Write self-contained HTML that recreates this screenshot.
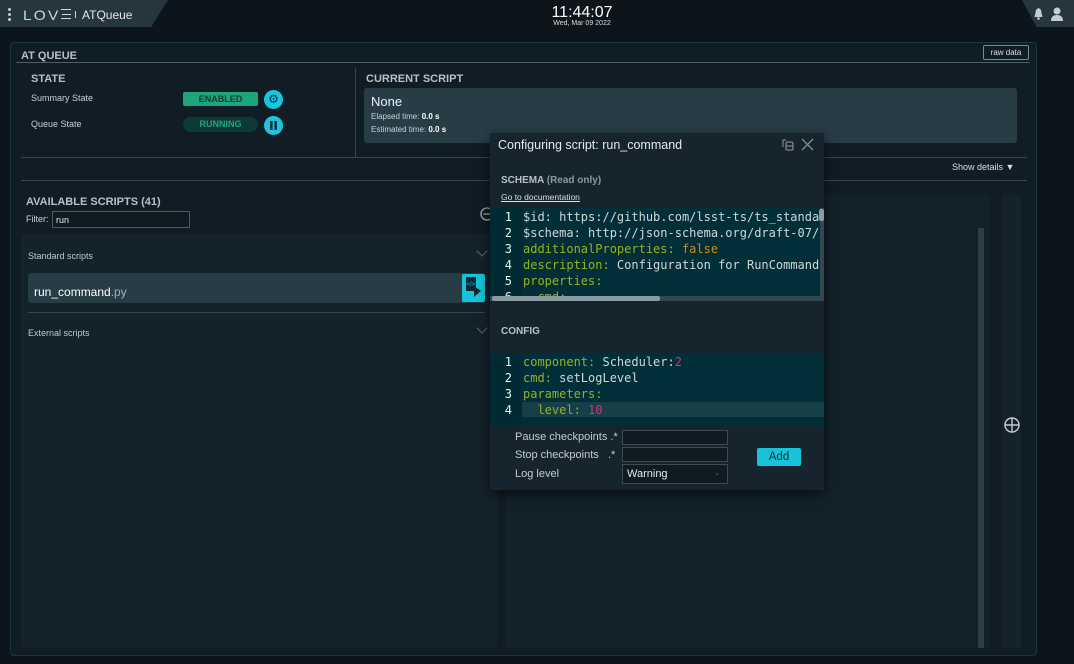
<!DOCTYPE html>
<html><head><meta charset="utf-8"><style>
*{box-sizing:border-box;margin:0;padding:0}
body{width:1074px;height:664px;background:#0b151b;font-family:"Liberation Sans",sans-serif;color:#c9d1d5;position:relative;overflow:hidden;font-size:11px}
.a{position:absolute}
.mono{font-family:"DejaVu Sans Mono","Liberation Mono",monospace}
.h{font-weight:bold;color:#b7c0c5}
</style></head><body>
<!-- top bar -->
<div class="a" style="left:0;top:0;width:168px;height:27px;background:#26363e;clip-path:polygon(0 0,100% 0,90% 100%,0 100%)"></div>
<div class="a" style="left:8px;top:8px;width:3px;height:3px;background:#ccc;border-radius:50%"></div>
<div class="a" style="left:8px;top:13px;width:3px;height:3px;background:#ccc;border-radius:50%"></div>
<div class="a" style="left:8px;top:18px;width:3px;height:3px;background:#ccc;border-radius:50%"></div>
<div class="a" style="left:23px;top:7px;font-size:14px;letter-spacing:2px;color:#d0d6da;transform:scaleX(1.1);transform-origin:left">LOV</div>
<div class="a" style="left:61px;top:9px;width:10px;height:10px;border-top:1.3px solid #d0d6da;border-bottom:1.3px solid #d0d6da"></div>
<div class="a" style="left:62px;top:13.5px;width:9px;height:1.3px;background:#d0d6da"></div>
<div class="a" style="left:75px;top:11px;width:1.3px;height:7px;background:#d0d6da"></div>
<div class="a" style="left:82px;top:8px;font-size:12px;color:#e2e6e8">ATQueue</div>
<div class="a" style="left:540px;top:4px;width:84px;text-align:center;font-size:16px;color:#fff">11:44:07</div>
<div class="a" style="left:540px;top:20px;width:84px;text-align:center;font-size:7px;color:#ddd">Wed, Mar 09 2022</div>
<div class="a" style="left:1022px;top:0;width:52px;height:27px;background:#26363e;clip-path:polygon(0 0,100% 0,100% 100%,28% 100%)"></div>
<svg class="a" style="left:1033px;top:7px" width="11" height="13"><path d="M5.5 1 Q8.5 2 8.5 6 L9.5 10 H1.5 L2.5 6 Q2.5 2 5.5 1Z" fill="#c6cdd1"/><circle cx="5.5" cy="11.5" r="1.3" fill="#c6cdd1"/></svg>
<svg class="a" style="left:1050px;top:7px" width="14" height="14"><circle cx="7" cy="4" r="3.5" fill="#c6cdd1"/><path d="M1 14 Q1 8 7 8 Q13 8 13 14Z" fill="#c6cdd1"/></svg>
<!-- main panel -->
<div class="a" style="left:10px;top:42px;width:1027px;height:614px;background:#101d24;border:1px solid #1b3541;border-radius:4px"></div>
<div class="a h" style="left:21px;top:50px;font-size:11px">AT QUEUE</div>
<div class="a" style="left:16px;top:62px;width:1014px;height:1px;background:#4b5f68;border-radius:4px"></div>
<div class="a" style="left:983px;top:45px;width:46px;height:15px;border:1px solid #7d8a90;border-radius:2px;font-size:8px;text-align:center;line-height:13px;color:#ddd">raw data</div>
<div class="a h" style="left:31px;top:73px;font-size:11px">STATE</div>
<div class="a" style="left:31px;top:93px;font-size:9px">Summary State</div>
<div class="a" style="left:31px;top:119px;font-size:9px">Queue State</div>
<div class="a" style="left:183px;top:92px;width:75px;height:14px;background:#1da57c;border-radius:2px;color:#0f3f33;font-size:9px;text-align:center;line-height:14px;font-weight:bold">ENABLED</div>
<div class="a" style="left:183px;top:117px;width:75px;height:15px;background:#0c3b35;border-radius:8px;color:#1fa57d;font-size:9px;text-align:center;line-height:15px;font-weight:bold">RUNNING</div>
<div class="a" style="left:264px;top:90px;width:19px;height:19px;border-radius:50%;background:#19c6e0;color:#0c2e38;text-align:center;font-size:12px;line-height:19px">⚙</div>
<svg class="a" style="left:264px;top:116px" width="19" height="19"><circle cx="9.5" cy="9.5" r="9.5" fill="#19c6e0"/><rect x="6" y="5" width="2.6" height="9" fill="#0c2e38"/><rect x="10.4" y="5" width="2.6" height="9" fill="#0c2e38"/></svg>
<div class="a" style="left:355px;top:68px;width:1px;height:89px;background:#34474f"></div>
<div class="a h" style="left:366px;top:73px;font-size:11px">CURRENT SCRIPT</div>
<div class="a" style="left:364px;top:88px;width:653px;height:55px;background:#283c46;border-radius:3px"></div>
<div class="a" style="left:371px;top:94px;font-size:13px;color:#eef">None</div>
<div class="a" style="left:371px;top:112px;font-size:8px">Elapsed time: <b style="color:#fff">0.0 s</b></div>
<div class="a" style="left:371px;top:125px;font-size:8px">Estimated time: <b style="color:#fff">0.0 s</b></div>
<div class="a" style="left:21px;top:157px;width:1006px;height:1px;background:#34474f"></div>
<div class="a" style="left:952px;top:162px;font-size:9px;color:#dde">Show details ▼</div>
<div class="a" style="left:21px;top:180px;width:1006px;height:1px;background:#34474f"></div>
<div class="a h" style="left:26px;top:196px;font-size:11px">AVAILABLE SCRIPTS (41)</div>
<div class="a" style="left:26px;top:214px;font-size:9px">Filter:</div>
<div class="a" style="left:52px;top:211px;width:138px;height:17px;border:1px solid #4a5b62;background:#0f1b21;font-size:9px;padding:3px 3px;color:#eee">run</div>
<svg class="a" style="left:480px;top:207px" width="14" height="14"><circle cx="7" cy="7" r="6" fill="none" stroke="#aaa" stroke-width="1.3"/><path d="M3.5 7H10.5" stroke="#aaa" stroke-width="1.3"/></svg>
<div class="a" style="left:21px;top:234px;width:476px;height:414px;background:#14222a;border-radius:3px"></div>
<div class="a" style="left:28px;top:251px;font-size:9px;color:#bcc">Standard scripts</div>
<div class="a" style="left:478px;top:247px;width:8px;height:8px;border-right:1px solid #667;border-bottom:1px solid #667;transform:rotate(45deg)"></div>
<div class="a" style="left:28px;top:273px;width:457px;height:30px;background:#283c46;border-radius:3px"></div>
<div class="a" style="left:34px;top:285px;font-size:12px;color:#fff">run_command<span style="color:#aab">.py</span></div>
<div class="a" style="left:462px;top:274px;width:23px;height:28px;background:#17c3d8;border-radius:2px"></div>
<svg class="a" style="left:465px;top:276px" width="18" height="24"><rect x="1" y="1" width="10" height="14" fill="#0c2a33"/><text x="1.5" y="10" font-size="6" fill="#17c3d8" font-family="Liberation Sans">&lt;/&gt;</text><path d="M9 10 L16 15 L9 21Z" fill="#0c2a33"/></svg>
<div class="a" style="left:28px;top:312px;width:457px;height:1px;background:#34474f"></div>
<div class="a" style="left:28px;top:328px;font-size:9px;color:#bcc">External scripts</div>
<div class="a" style="left:478px;top:324px;width:8px;height:8px;border-right:1px solid #667;border-bottom:1px solid #667;transform:rotate(45deg)"></div>
<!-- right column -->
<div class="a" style="left:505px;top:195px;width:485px;height:453px;background:#13222a"></div>
<div class="a" style="left:978px;top:228px;width:6px;height:420px;background:#2c3f48"></div>
<div class="a" style="left:1002px;top:195px;width:19px;height:453px;background:#14232b"></div>
<svg class="a" style="left:1004px;top:417px" width="16" height="16"><circle cx="8" cy="8" r="7" fill="none" stroke="#c4cbcf" stroke-width="1.4"/><path d="M8 1V15M1 8H15" stroke="#c4cbcf" stroke-width="1.4"/></svg>
<!-- modal -->
<div class="a" style="left:490px;top:133px;width:334px;height:357px;background:#16252d;box-shadow:0 4px 12px rgba(0,0,0,.6)"></div>
<div class="a" style="left:498px;top:138px;font-size:12.5px;color:#e4e8ea">Configuring script: run_command</div>
<svg class="a" style="left:781px;top:138px" width="14" height="14"><path d="M5 2 H2 V9" fill="none" stroke="#99a" stroke-width="1"/><rect x="5" y="4" width="7" height="8" rx="1.5" fill="none" stroke="#99a"/><path d="M5 8H12" stroke="#99a"/></svg>
<svg class="a" style="left:801px;top:138px" width="13" height="13"><path d="M1 1L12 12M12 1L1 12" stroke="#99a" stroke-width="1.2"/></svg>
<div class="a h" style="left:501px;top:175px;font-size:10px">SCHEMA <span style="color:#8b989e">(Read only)</span></div>
<div class="a" style="left:501px;top:192px;font-size:8.5px;color:#dde;text-decoration:underline">Go to documentation</div>
<div class="a" style="left:490px;top:208px;width:334px;height:93px;background:#002f3a;overflow:hidden">
<div class="a" style="left:0;top:0;width:32px;height:93px;background:#012a34"></div>
<div class="a mono" style="left:0;top:1px;width:22px;text-align:right;font-size:12px;line-height:16px;color:#dfe">1<br>2<br>3<br>4<br>5<br>6</div>
<div class="a mono" style="left:33px;top:1px;font-size:12px;line-height:16px;color:#d0d6d8;white-space:pre"><span>$id: https://github.com/lsst-ts/ts_standard</span>
<span>$schema: http://json-schema.org/draft-07/</span>
<span style="color:#9ab01b">additionalProperties:</span> <span style="color:#d08a16">false</span>
<span style="color:#9ab01b">description:</span> Configuration for RunCommand
<span style="color:#9ab01b">properties:</span>
<span style="color:#9ab01b">  cmd:</span></div>
<div class="a" style="left:330px;top:0;width:4px;height:93px;background:#34484f"></div>
<div class="a" style="left:329px;top:1px;width:5px;height:12px;background:#8a9aa1;border-radius:2px"></div>
<div class="a" style="left:0;top:88px;width:334px;height:5px;background:#34484f"></div>
<div class="a" style="left:2px;top:88px;width:168px;height:5px;background:#8a9aa1;border-radius:2px"></div>
</div>
<div class="a h" style="left:501px;top:326px;font-size:10px">CONFIG</div>
<div class="a" style="left:490px;top:353px;width:334px;height:72px;background:#002f3a"></div>
<div class="a" style="left:490px;top:353px;width:32px;height:72px;background:#012a34"></div>
<div class="a" style="left:522px;top:402px;width:302px;height:15px;background:#173f48"></div>
<div class="a mono" style="left:490px;top:354px;width:22px;text-align:right;font-size:12px;line-height:16px;color:#dfe">1<br>2<br>3<br>4</div>
<div class="a mono" style="left:523px;top:354px;font-size:12px;line-height:16px;color:#d0d6d8;white-space:pre"><span style="color:#9ab01b">component:</span> Scheduler:<span style="color:#d5337a">2</span>
<span style="color:#9ab01b">cmd:</span> setLogLevel
<span style="color:#9ab01b">parameters:</span>
<span style="color:#9ab01b">  level:</span> <span style="color:#d5337a">10</span></div>
<div class="a" style="left:515px;top:431px;font-size:11px;color:#c4cbcf">Pause checkpoints .*</div>
<div class="a" style="left:515px;top:449px;font-size:11px;color:#c4cbcf">Stop checkpoints &nbsp;&nbsp;.*</div>
<div class="a" style="left:515px;top:468px;font-size:11px;color:#c4cbcf">Log level</div>
<div class="a" style="left:622px;top:430px;width:106px;height:15px;border:1px solid #3c4c53;background:#0f1b21"></div>
<div class="a" style="left:622px;top:447px;width:106px;height:15px;border:1px solid #3c4c53;background:#0f1b21"></div>
<div class="a" style="left:622px;top:464px;width:106px;height:20px;border:1px solid #3c4c53;background:#0f1b21;font-size:11px;padding:3px 4px;color:#e4e8ea">Warning<span style="position:absolute;right:7px;top:4px;font-size:7px;color:#667">⌄</span></div>
<div class="a" style="left:757px;top:448px;width:44px;height:18px;background:#17c3d8;border-radius:2px;font-size:11.5px;text-align:center;line-height:18px;color:#0c2e38">Add</div>
</body></html>
